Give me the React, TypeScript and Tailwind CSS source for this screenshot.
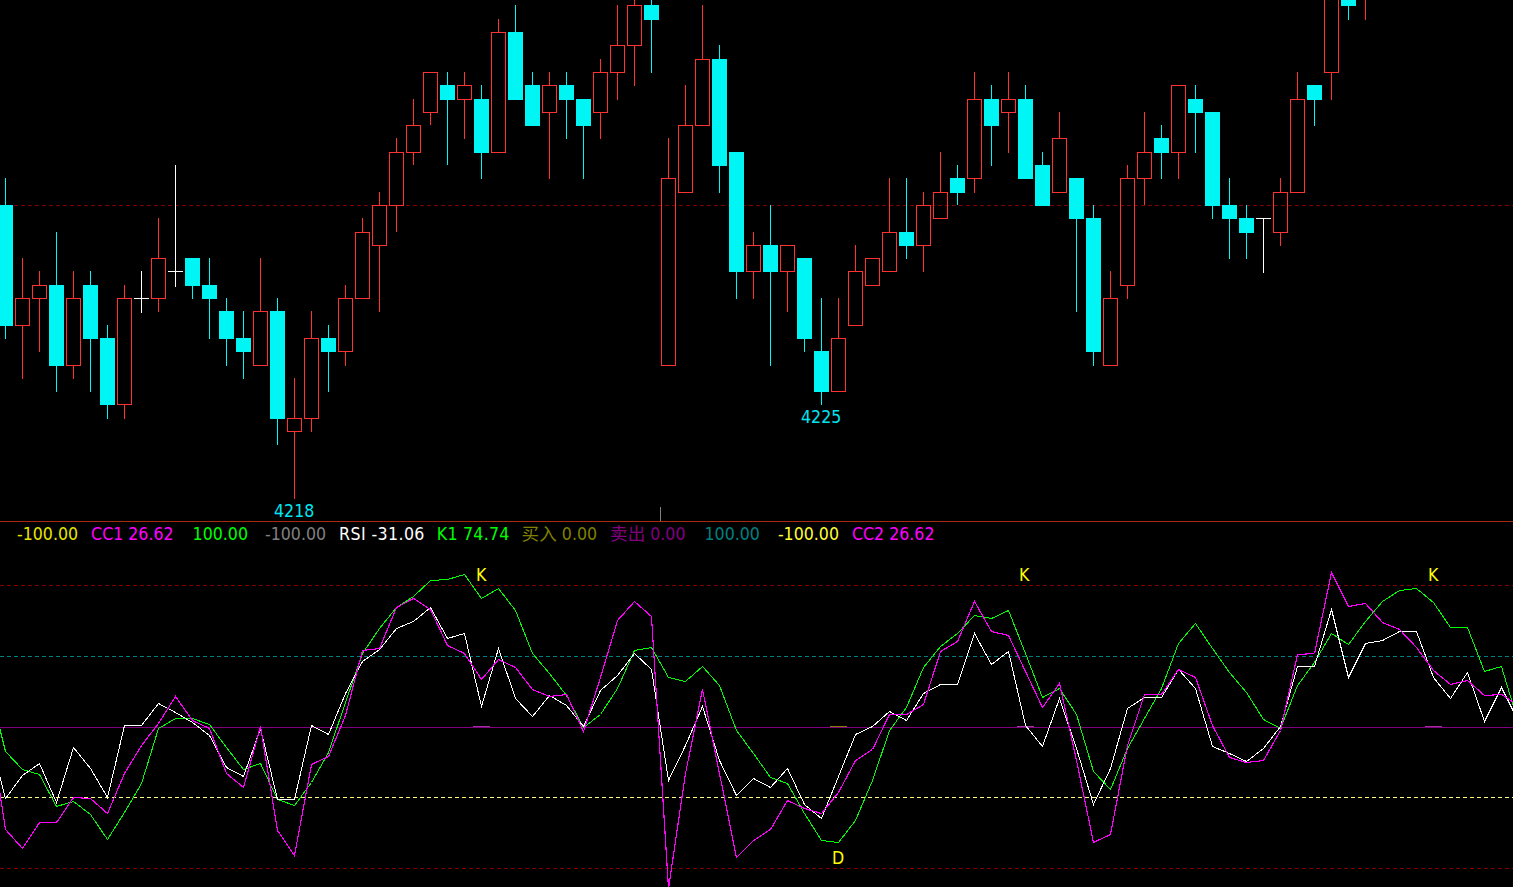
// Candle rows are [kind, high, top, bottom, low], all in pixels of the upper panel
type Candle = ['up' | 'down' | 'flat', number, number, number, number];

const candles: Candle[] = [
  ['down', 178, 205, 326, 339],
  ['up', 258, 298, 326, 379],
  ['up', 271, 285, 299, 352],
  ['down', 232, 285, 366, 392],
  ['up', 271, 298, 366, 379],
  ['down', 271, 285, 339, 392],
  ['down', 325, 338, 405, 419],
  ['up', 285, 298, 405, 419],
  ['flat', 271, 298, 298, 312],
  ['up', 218, 258, 299, 312],
  ['flat', 165, 271, 271, 286],
  ['down', 258, 258, 286, 299],
  ['down', 258, 285, 299, 339],
  ['down', 298, 311, 339, 366],
  ['down', 311, 338, 352, 379],
  ['up', 258, 311, 366, 366],
  ['down', 298, 311, 419, 445],
  ['up', 378, 418, 432, 499],
  ['up', 311, 338, 419, 432],
  ['down', 325, 338, 352, 392],
  ['up', 285, 298, 352, 366],
  ['up', 218, 232, 299, 299],
  ['up', 192, 205, 246, 312],
  ['up', 138, 152, 206, 232],
  ['up', 99, 125, 153, 165],
  ['up', 72, 72, 113, 125],
  ['down', 72, 85, 100, 165],
  ['up', 72, 85, 100, 139],
  ['down', 85, 99, 153, 179],
  ['up', 19, 32, 153, 153],
  ['down', 5, 32, 100, 100],
  ['down', 72, 85, 126, 126],
  ['up', 72, 85, 113, 179],
  ['down', 72, 85, 100, 139],
  ['down', 99, 99, 126, 179],
  ['up', 59, 72, 113, 139],
  ['up', 5, 45, 73, 100],
  ['up', 0, 5, 46, 86],
  ['down', 0, 5, 20, 73],
  ['up', 138, 178, 366, 366],
  ['up', 85, 125, 193, 193],
  ['up', 5, 59, 126, 126],
  ['down', 45, 59, 166, 193],
  ['down', 152, 152, 272, 299],
  ['up', 232, 245, 272, 299],
  ['down', 205, 245, 272, 366],
  ['up', 245, 245, 272, 312],
  ['down', 258, 258, 339, 352],
  ['down', 298, 351, 392, 405],
  ['up', 298, 338, 392, 392],
  ['up', 245, 271, 326, 326],
  ['up', 258, 258, 286, 286],
  ['up', 178, 232, 272, 272],
  ['down', 178, 232, 246, 259],
  ['up', 192, 205, 246, 272],
  ['up', 152, 192, 219, 219],
  ['down', 165, 178, 193, 205],
  ['up', 72, 99, 179, 193],
  ['down', 85, 99, 126, 166],
  ['up', 72, 99, 113, 153],
  ['down', 85, 99, 179, 179],
  ['down', 152, 165, 206, 206],
  ['up', 112, 138, 193, 193],
  ['down', 178, 178, 219, 312],
  ['down', 205, 218, 352, 366],
  ['up', 271, 298, 366, 366],
  ['up', 165, 178, 286, 299],
  ['up', 112, 152, 179, 205],
  ['down', 125, 138, 153, 179],
  ['up', 85, 85, 153, 179],
  ['down', 85, 99, 113, 153],
  ['down', 112, 112, 206, 219],
  ['down', 178, 205, 219, 259],
  ['down', 205, 218, 233, 259],
  ['flat', 218, 218, 218, 272],
  ['up', 178, 192, 233, 246],
  ['up', 72, 99, 193, 193],
  ['down', 85, 85, 100, 126],
  ['up', -40, -30, 73, 100],
  ['down', -40, -30, 6, 20],
  ['up', -40, -30, -5, 20],
];

// Indicator values per bar, the first one sits left of the window
const whiteLine = [731, 798, 775, 763, 802, 747, 768, 797, 725, 725, 703, 712, 722, 735, 767, 776, 728, 799, 799, 725, 734, 693, 661, 649, 628, 621, 607, 638, 633, 706, 648, 698, 716, 695, 705, 726, 690, 675, 653, 669, 780, 745, 706, 760, 795, 778, 787, 768, 804, 818, 776, 734, 726, 711, 720, 693, 684, 684, 633, 664, 651, 725, 746, 698, 748, 804, 768, 708, 697, 697, 669, 688, 746, 753, 761, 748, 726, 666, 666, 609, 677, 643, 640, 631, 631, 677, 698, 672, 721, 687, 721];
const greenLine = [683, 751, 769, 774, 806, 801, 814, 839, 812, 783, 728, 718, 718, 724, 747, 769, 763, 799, 805, 782, 752, 702, 653, 628, 607, 596, 580, 579, 574, 598, 588, 610, 653, 673, 695, 727, 714, 688, 650, 647, 677, 681, 666, 685, 730, 753, 777, 783, 813, 840, 842, 820, 780, 730, 707, 667, 646, 633, 615, 618, 610, 653, 697, 688, 714, 771, 789, 748, 718, 688, 643, 623, 648, 672, 692, 719, 728, 685, 662, 633, 644, 621, 601, 590, 588, 602, 627, 627, 671, 666, 723];
const magentaLine = [718, 829, 848, 822, 822, 797, 798, 813, 773, 745, 723, 696, 720, 728, 773, 787, 726, 830, 855, 764, 756, 715, 650, 648, 607, 598, 609, 645, 653, 679, 659, 667, 689, 696, 694, 731, 677, 620, 601, 616, 888, 773, 689, 773, 857, 840, 829, 800, 808, 813, 792, 760, 749, 714, 714, 704, 651, 641, 601, 631, 635, 671, 707, 683, 760, 842, 834, 745, 694, 694, 669, 677, 725, 757, 762, 760, 730, 654, 653, 572, 606, 603, 622, 629, 647, 670, 684, 680, 695, 694, 705];

const toPoints = (values: number[]) =>
  values.map((y, i) => `${5.5 + 17 * (i - 1)},${y + 0.5}`).join(' ');

const levels = [
  { y: 585.5, color: '#800000', dash: '4 3' },
  { y: 656.5, color: '#008080', dash: '4 3' },
  { y: 727.5, color: '#800080', dash: undefined },
  { y: 797.5, color: '#ffff80', dash: '4 3' },
  { y: 868.5, color: '#800000', dash: '4 3' },
];

const marks = [
  { from: 473, to: 490, color: '#a030a0' },
  { from: 830, to: 847, color: '#808000' },
  { from: 1017, to: 1034, color: '#a040a0' },
  { from: 1425, to: 1442, color: '#a030a0' },
];

function CandleChart() {
  return (
    <svg width={1513} height={521} viewBox="0 0 1513 521" shapeRendering="crispEdges" className="block">
      <line x1={0} x2={1513} y1={205.5} y2={205.5} stroke="#800000" strokeDasharray="4 3" />
      <rect x={660} y={507} width={1} height={14} fill="#808080" />
      {candles.map(([kind, high, top, bottom, low], i) => {
        const x = 5 + 17 * i;
        const color = kind === 'up' ? '#ff3232' : kind === 'down' ? '#00f5f5' : '#ffffff';
        return (
          <g key={i}>
            {kind === 'flat' ? (
              <>
                <rect x={x} y={high} width={1} height={low - high + 1} fill={color} />
                <rect x={x - 7} y={top} width={15} height={1} fill={color} />
              </>
            ) : (
              <>
                <rect x={x} y={high} width={1} height={Math.max(top - high, 0)} fill={color} />
                <rect x={x} y={bottom} width={1} height={Math.max(low - bottom, 0)} fill={color} />
                {kind === 'down' ? (
                  <rect x={x - 7} y={top} width={15} height={bottom - top} fill={color} />
                ) : (
                  <rect x={x - 6.5} y={top + 0.5} width={14} height={bottom - top - 1} fill="none" stroke={color} />
                )}
              </>
            )}
          </g>
        );
      })}
    </svg>
  );
}

function IndicatorChart() {
  return (
    <svg width={1513} height={339} viewBox="0 548 1513 339" shapeRendering="crispEdges" className="block">
      {levels.map(l => (
        <line key={l.y} x1={0} x2={1513} y1={l.y} y2={l.y} stroke={l.color} strokeDasharray={l.dash} />
      ))}
      {marks.map(m => (
        <rect key={m.from} x={m.from} y={726} width={m.to - m.from} height={1} fill={m.color} />
      ))}
      <polyline points={toPoints(greenLine)} fill="none" stroke="#00ff00" />
      <polyline points={toPoints(whiteLine)} fill="none" stroke="#ffffff" />
      <polyline points={toPoints(magentaLine)} fill="none" stroke="#ff00ff" strokeWidth={1.15} />
    </svg>
  );
}

export default function App() {
  return (
    <div className="flex h-screen w-full flex-col overflow-hidden bg-black font-['DejaVu_Sans','Noto_Sans_CJK_SC',sans-serif] font-stretch-condensed text-[17.6px] leading-none">
      <div className="relative h-[522px] shrink-0 border-b border-[#a82a10]">
        <CandleChart />
        <span className="absolute left-[801px] top-[409px] text-[#00e6f0]">4225</span>
        <span className="absolute left-[274px] top-[503px] text-[#00e6f0]">4218</span>
      </div>

      <div className="flex h-[26px] shrink-0 items-center whitespace-nowrap">
        <span className="ml-[17px] text-[#e6e600]">-100.00</span>
        <span className="ml-[13px] text-[#ff00ff]">CC1 26.62</span>
        <span className="ml-[19px] text-[#00ff00]">100.00</span>
        <span className="ml-[17px] text-[#808080]">-100.00</span>
        <span className="ml-[13px] tracking-[0.4px] text-white">RSI -31.06</span>
        <span className="ml-[12px] tracking-[0.25px] text-[#00ff00]">K1 74.74</span>
        <span className="ml-[12px] text-[#808000]">买入 0.00</span>
        <span className="ml-[13px] text-[#800080]">卖出 0.00</span>
        <span className="ml-[19px] text-[#008080]">100.00</span>
        <span className="ml-[18px] text-[#ffff33]">-100.00</span>
        <span className="ml-[13px] text-[#ff00ff]">CC2 26.62</span>
      </div>

      <div className="relative flex-1">
        <IndicatorChart />
        <span className="absolute left-[476px] top-[19px] text-[#ffff00]">K</span>
        <span className="absolute left-[1019px] top-[19px] text-[#ffff00]">K</span>
        <span className="absolute left-[1428px] top-[19px] text-[#ffff00]">K</span>
        <span className="absolute left-[832px] top-[302px] text-[#ffff00]">D</span>
      </div>
    </div>
  );
}
